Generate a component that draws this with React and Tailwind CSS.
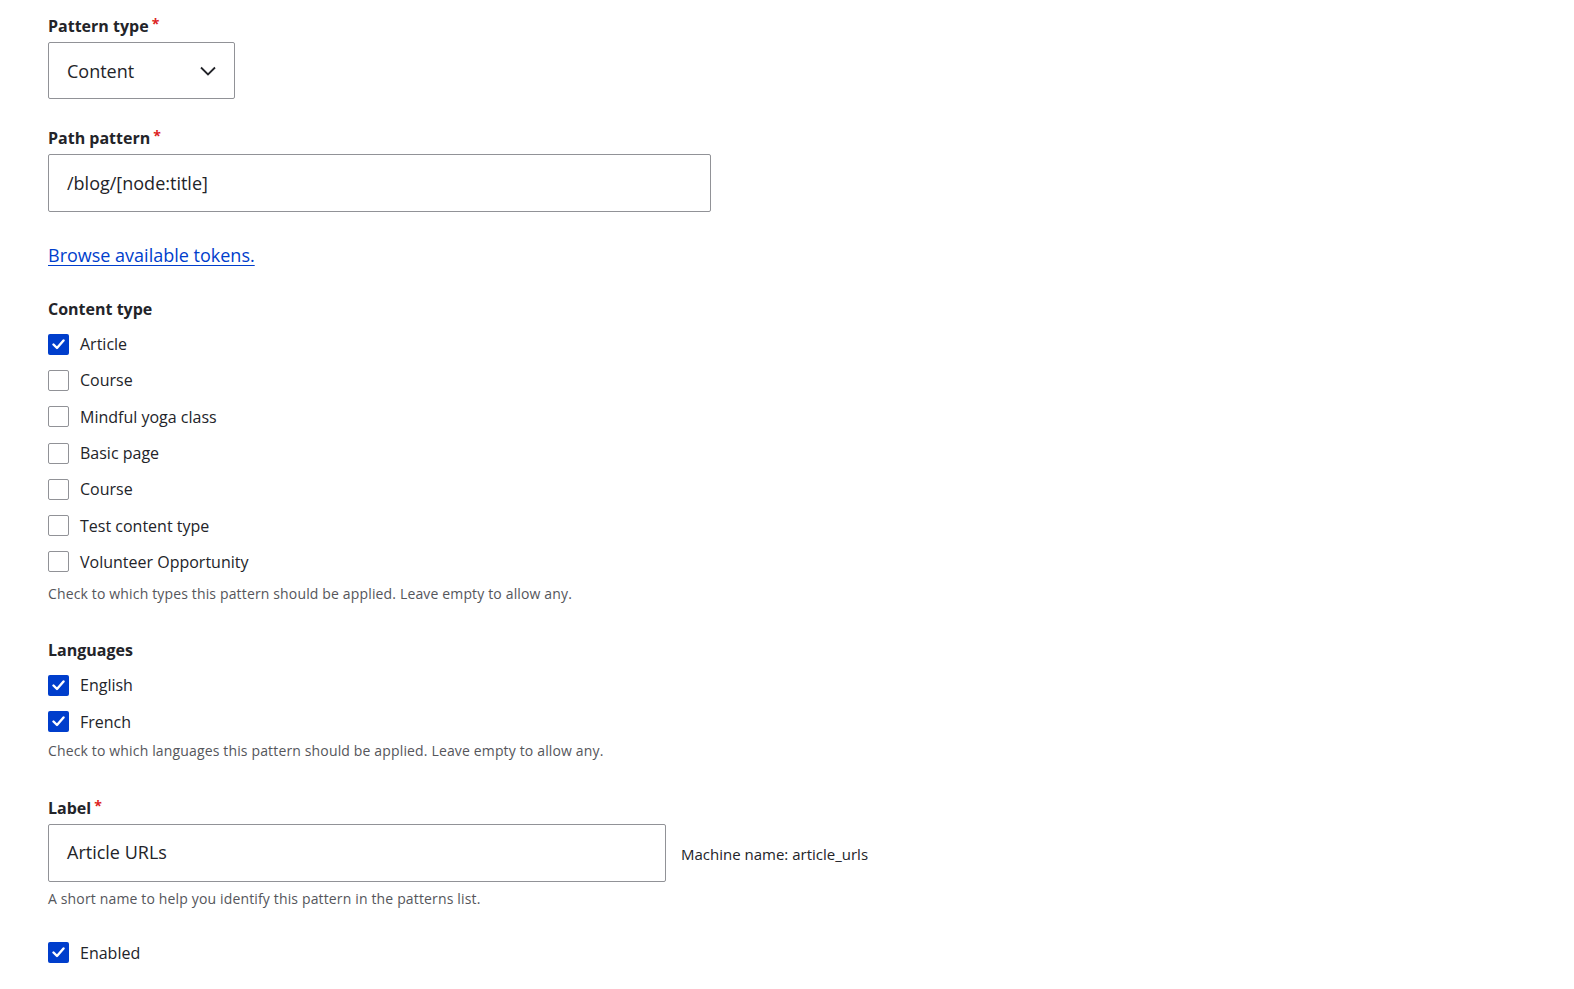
import React from "react";

const Check = ({ checked, label }) => (
  <label className="flex items-center h-[36.3px] gap-[11px] text-[16px] text-[#232429]">
    <span
      className={
        checked
          ? "w-[21px] h-[21px] rounded-[2px] bg-[#003ecc] flex items-center justify-center"
          : "w-[21px] h-[21px] rounded-[2px] border border-[#919297] bg-white"
      }
    >
      {checked && (
        <svg width="13" height="11" viewBox="0 0 13 11" fill="none">
          <path d="M1.5 5.5l3.5 3.5 6.5-7.5" stroke="white" strokeWidth="2.4" strokeLinecap="round" strokeLinejoin="round" />
        </svg>
      )}
    </span>
    <span>{label}</span>
  </label>
);

const Label = ({ children, required }) => (
  <div className="text-[16px] font-bold text-[#232429] leading-[22px] flex items-start">
    {children}
    {required && <span className="text-[#dc2323] text-[14px] ml-[3px] leading-[18px]">*</span>}
  </div>
);

const Desc = ({ children }) => (
  <p className="text-[14px] text-[#55565b] leading-[20px] tracking-[0.15px]">{children}</p>
);

export default function App() {
  const contentTypes = [
    ["Article", true],
    ["Course", false],
    ["Mindful yoga class", false],
    ["Basic page", false],
    ["Course", false],
    ["Test content type", false],
    ["Volunteer Opportunity", false],
  ];

  return (
    <div className="min-h-screen bg-white px-[48px] pt-[15px]" style={{ fontFamily: '"Open Sans", sans-serif' }}>
      {/* Pattern type */}
      <Label required>Pattern type</Label>
      <div className="mt-[5px] w-[187px] h-[57px] border border-[#919297] rounded-[2px] flex items-center justify-between pl-[18px] pr-[18px]">
        <span className="text-[18px] text-[#232429] mt-[1px]">Content</span>
        <svg width="16" height="10" viewBox="0 0 16 10" fill="none">
          <path d="M1 1.5l7 7 7-7" stroke="#232429" strokeWidth="1.8" />
        </svg>
      </div>

      {/* Path pattern */}
      <div className="mt-[28px]">
        <Label required>Path pattern</Label>
      </div>
      <div className="mt-[5px] w-[663px] h-[58px] border border-[#919297] rounded-[2px] flex items-center pl-[18px]">
        <span className="text-[18px] text-[#232429]">/blog/[node:title]</span>
      </div>

      <div className="mt-[31px]">
        <a href="#" className="text-[18px] text-[#003ecc] underline underline-offset-[3px] leading-[24px]">
          Browse available tokens.
        </a>
      </div>

      {/* Content type */}
      <div className="mt-[30px]">
        <Label>Content type</Label>
      </div>
      <div className="mt-[6px]">
        {contentTypes.map(([name, checked], i) => (
          <Check key={i} label={name} checked={checked} />
        ))}
      </div>
      <div className="mt-[4px]">
        <Desc>Check to which types this pattern should be applied. Leave empty to allow any.</Desc>
      </div>

      {/* Languages */}
      <div className="mt-[35px]">
        <Label>Languages</Label>
      </div>
      <div className="mt-[6px]">
        <Check label="English" checked />
        <Check label="French" checked />
      </div>
      <div className="mt-[1px]">
        <Desc>Check to which languages this pattern should be applied. Leave empty to allow any.</Desc>
      </div>

      {/* Label */}
      <div className="mt-[36px]">
        <Label required>Label</Label>
      </div>
      <div className="mt-[5px] flex items-center gap-[15px]">
        <div className="w-[618px] h-[58px] border border-[#919297] rounded-[2px] flex items-center pl-[18px]">
          <span className="text-[18px] text-[#232429]">Article URLs</span>
        </div>
        <span className="text-[15px] text-[#232429] mt-[4px]">Machine name: article_urls</span>
      </div>
      <div className="mt-[7px]">
        <Desc>A short name to help you identify this pattern in the patterns list.</Desc>
      </div>

      <div className="mt-[26px]">
        <Check label="Enabled" checked />
      </div>
    </div>
  );
}
